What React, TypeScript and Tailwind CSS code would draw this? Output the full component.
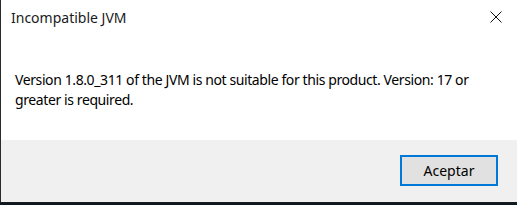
export default function App() {
  return (
    <div className="w-[517px] h-[205px] bg-[#0f1a20] flex flex-col overflow-hidden">
      <div
        className="h-[202px] flex flex-col bg-white border-l border-[#2b2b2b] text-black"
        style={{ fontFamily: '"Noto Sans", "Open Sans", sans-serif' }}
      >
        {/* Title bar */}
        <div className="h-[34px] flex items-center justify-between pl-[10px] pr-[10px]">
          <span className="text-[14px] text-[#1a1a1a]">Incompatible JVM</span>
          <svg width="12" height="12" viewBox="0 0 12 12" className="mr-[5px]">
            <path d="M0.5 0.5 L11.5 11.5 M11.5 0.5 L0.5 11.5" stroke="#111" strokeWidth="1" />
          </svg>
        </div>
        {/* Message */}
        <div className="h-[106px] pl-[14px] pr-[20px] pt-[36px]">
          <p className="text-[14px] leading-[20px] tracking-[-0.4px] w-[472px]">
            Version 1.8.0_311 of the JVM is not suitable for this product. Version: 17 or greater is required.
          </p>
        </div>
        {/* Footer */}
        <div className="flex-1 bg-[#f0f0f0] flex justify-end items-start pt-[15px] pr-[19px]">
          <button className="w-[98px] h-[31px] bg-[#e1e1e1] border-2 border-[#0078d7] text-[14px] text-black">
            Aceptar
          </button>
        </div>
      </div>
      <div className="h-[1px] bg-[#1c1c1c]" />
    </div>
  );
}
